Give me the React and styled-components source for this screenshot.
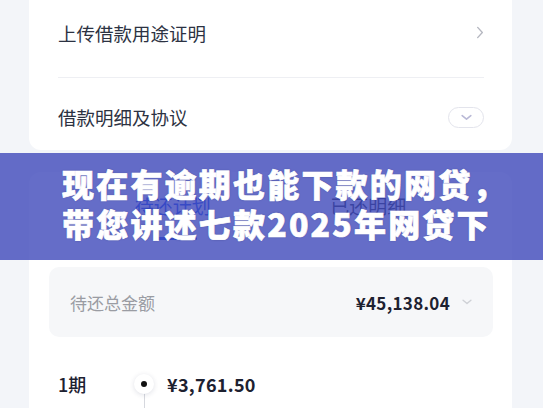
import React from "react";
import styled, { createGlobalStyle } from "styled-components";

const Global = createGlobalStyle`
  html, body { margin: 0; padding: 0; }
  body {
    background: #f3f5f9;
    font-family: "Noto Sans CJK SC", "Noto Sans", sans-serif;
    width: 543px;
    height: 408px;
    overflow: hidden;
  }
`;

const Page = styled.div`
  position: relative;
  padding: 0 31px 0 29px;
  height: 408px;
  overflow: hidden;
`;

const Card = styled.div`
  background: #fff;
  border-radius: ${(p) => (p.$top ? "0 0 12px 12px" : "12px 12px 0 0")};
  padding: ${(p) => (p.$top ? "0 28px 0 29px" : "0 19px 0 20px")};
  margin-top: ${(p) => (p.$top ? "0" : "22px")};
`;

const Row = styled.div`
  display: flex;
  align-items: center;
  justify-content: space-between;
  height: ${(p) => p.$h}px;
  padding: ${(p) => p.$pad};
  box-sizing: border-box;
  font-size: 18.5px;
  color: #2c3242;
`;

const Divider = styled.div`
  height: 1px;
  background: #eeeff3;
`;

const Pill = styled.div`
  width: 34px;
  height: 19px;
  border: 1px solid #e3e4ec;
  border-radius: 11px;
  display: flex;
  align-items: center;
  justify-content: center;
`;

const Tabs = styled.div`
  display: grid;
  grid-template-columns: 1fr 1fr;
  padding: 0 27px 0 26px;
  height: 82px;
`;

const Tab = styled.div`
  position: relative;
  display: flex;
  justify-content: center;
  padding-top: 24px;
  font-size: 19px;
  line-height: 20px;
  color: ${(p) => (p.$active ? "#1a4ff0" : "#2a3040")};
`;

const Underline = styled.div`
  position: absolute;
  top: 65px;
  left: 50%;
  margin-left: -18px;
  width: 42px;
  height: 3px;
  border-radius: 2px;
  background: #1a4ff0;
`;

const TotalBox = styled.div`
  margin-top: 13px;
  height: 70px;
  background: #f6f7f9;
  border-radius: 10px;
  display: flex;
  align-items: center;
  justify-content: space-between;
  padding: 0 21px;
`;

const Muted = styled.span`
  font-size: 17px;
  color: #9a9ca3;
`;

const AmountWrap = styled.div`
  display: flex;
  align-items: center;
  gap: 12px;
`;

const Amount = styled.span`
  font-size: ${(p) => p.$size}px;
  font-weight: 700;
  color: #1d2130;
  letter-spacing: 0.3px;
`;

const Period = styled.div`
  display: grid;
  grid-template-columns: 63px 28px 1fr;
  column-gap: 9px;
  align-items: center;
  padding: 34px 0 0 9px;
`;

const PeriodLabel = styled.span`
  font-size: 18px;
  color: #1d2130;
  font-weight: 500;
`;

const DotCol = styled.div`
  position: relative;
  display: flex;
  justify-content: center;
  height: 24px;
  align-items: center;
`;

const Dot = styled.div`
  width: 20px;
  height: 20px;
  border-radius: 50%;
  background: #fff;
  box-shadow: 0 1px 5px rgba(40, 50, 90, 0.15);
  display: flex;
  align-items: center;
  justify-content: center;
  position: relative;
  z-index: 1;
  &::after {
    content: "";
    width: 6px;
    height: 6px;
    border-radius: 50%;
    background: #111;
  }
`;

const Line = styled.div`
  position: absolute;
  top: 20px;
  left: 50%;
  width: 1px;
  height: 40px;
  background: #d6d8de;
`;

const SubRow = styled.div`
  display: grid;
  grid-template-columns: 109px 1fr;
  padding: 20px 0 0 9px;
  font-size: 14px;
  color: #9a9ca3;
`;

const Banner = styled.div`
  position: absolute;
  top: 153px;
  left: 0;
  right: 0;
  height: 107px;
  background: rgba(62, 72, 186, 0.8);
  box-sizing: border-box;
  padding: 10px 0 0 62px;
  color: #fff;
  font-size: 32px;
  font-weight: 900;
  line-height: 40px;
  letter-spacing: 2.2px;
  -webkit-text-stroke: 0.7px #fff;
  text-shadow: 0 0 2px rgba(20, 20, 60, 0.35);
  white-space: nowrap;
`;

const Chevron = ({ dir, color, w, h }) =>
  dir === "right" ? (
    <svg width={w} height={h} viewBox="0 0 8 14" fill="none">
      <path d="M1.5 1.5 L6.5 7 L1.5 12.5" stroke={color} strokeWidth="1.5" strokeLinecap="round" strokeLinejoin="round" />
    </svg>
  ) : (
    <svg width={w} height={h} viewBox="0 0 14 8" fill="none">
      <path d="M1.5 1.5 L7 6 L12.5 1.5" stroke={color} strokeWidth="2" strokeLinecap="round" strokeLinejoin="round" />
    </svg>
  );

export default function App() {
  return (
    <>
      <Global />
      <Page>
        <Card $top>
          <Row $h={77} $pad="0 0 12px 0">
            上传借款用途证明
            <Chevron dir="right" color="#b5b7c0" w={8} h={13} />
          </Row>
          <Divider />
          <Row $h={72} $pad="6px 0 0 0">
            借款明细及协议
            <Pill>
              <Chevron dir="down" color="#b9b9d6" w={11} h={7} />
            </Pill>
          </Row>
        </Card>
        <Card>
          <Tabs>
            <Tab $active>
              待还计划
              <Underline />
            </Tab>
            <Tab>已还明细</Tab>
          </Tabs>
          <TotalBox>
            <Muted>待还总金额</Muted>
            <AmountWrap>
              <Amount $size={17}>¥45,138.04</Amount>
              <Chevron dir="down" color="#cfd1d6" w={10} h={6} />
            </AmountWrap>
          </TotalBox>
          <Period>
            <PeriodLabel>1期</PeriodLabel>
            <DotCol>
              <Dot />
              <Line />
            </DotCol>
            <Amount $size={18}>¥3,761.50</Amount>
          </Period>
          <SubRow>
            <span>2025/06/26</span>
            <span>本金 ¥3,000.00　利息 ¥761.50</span>
          </SubRow>
        </Card>
        <Banner>
          现在有逾期也能下款的网贷，
          <br />
          带您讲述七款2025年网贷下
        </Banner>
      </Page>
    </>
  );
}
